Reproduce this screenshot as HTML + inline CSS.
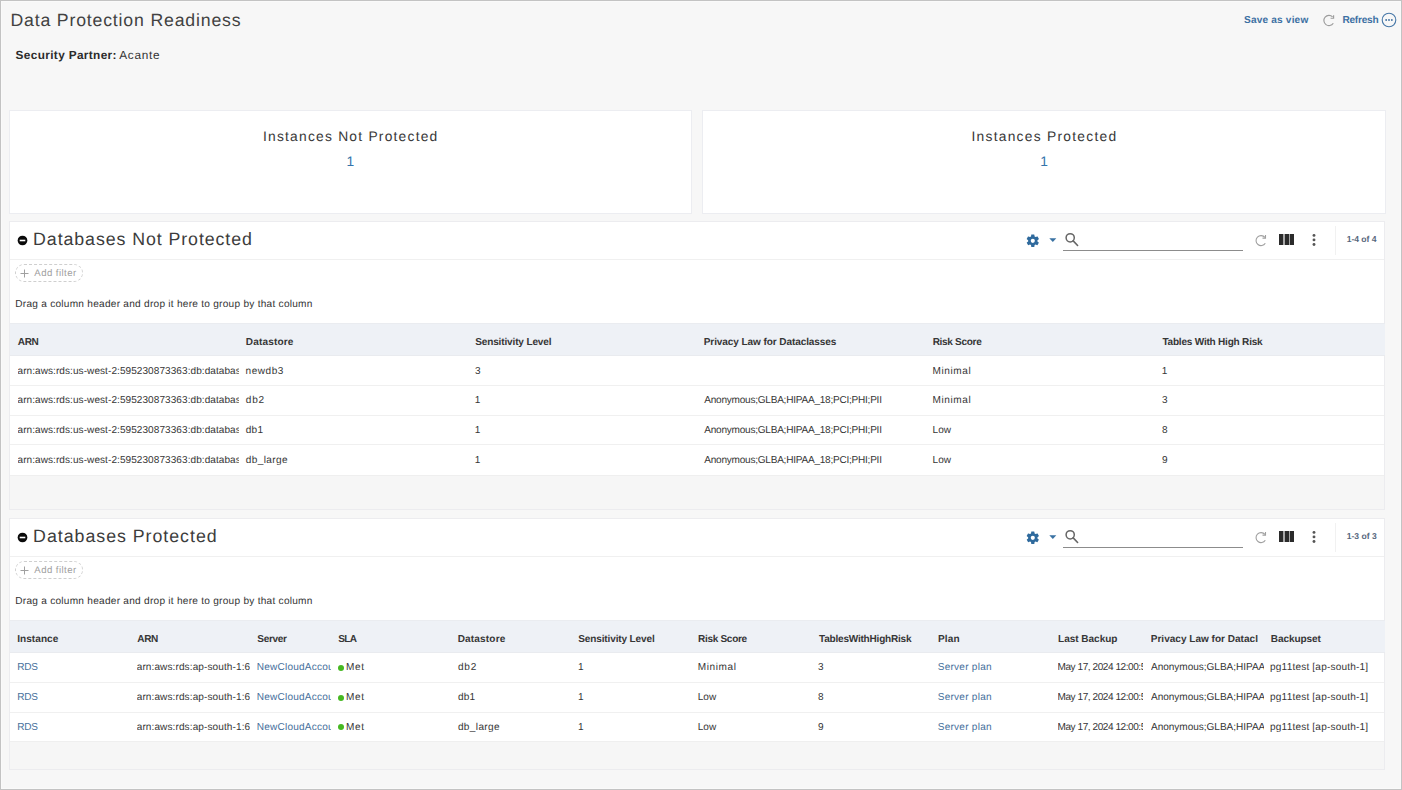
<!DOCTYPE html>
<html lang="en">
<head>
<meta charset="utf-8">
<title>Data Protection Readiness</title>
<style>
html,body{margin:0;padding:0;}
body{width:1402px;height:790px;overflow:hidden;background:#f7f7f7;font-family:"Liberation Sans",sans-serif;color:#2e2e2e;position:relative;text-rendering:geometricPrecision;}
#frame{position:absolute;left:0;top:0;width:1400px;height:788px;border:1px solid #c3c3c3;box-shadow:inset 0 0 0 1px #fafafa;z-index:50;}
.abs{position:absolute;}
.ic{position:absolute;overflow:visible;}
.t{position:absolute;white-space:nowrap;line-height:1;display:block;}
h1,h2{margin:0;font-weight:400;font-size:inherit;}
.card{position:absolute;background:#fff;border:1px solid #ecedf1;box-sizing:border-box;}
.panel{position:absolute;background:#fff;border:1px solid #ececef;box-sizing:border-box;left:9px;width:1376px;}
</style>
</head>
<body>
<div id="frame"></div>

<header>
<span class="t" style="left:10.4px;top:12px;font-size:17.7px;letter-spacing:0.825px;color:#424242;">Data Protection Readiness</span>
<span class="t" style="left:15.6px;top:50px;font-size:11.8px;font-weight:700;letter-spacing:0.363px;color:#2b2b2b;">Security Partner:</span>
<span class="t" style="left:119.2px;top:50px;font-size:11.8px;letter-spacing:0.73px;color:#333;">Acante</span>
<span class="t" style="left:1244.05px;top:16px;font-size:10.1px;font-weight:700;letter-spacing:0.173px;color:#3d70a3;">Save as view</span>
<span class="t" style="left:1342.45px;top:16px;font-size:10.1px;font-weight:700;letter-spacing:-0.242px;color:#3d70a3;">Refresh</span>
<svg class="ic" style="left:1320.9px;top:13.4px" width="16" height="16" viewBox="0 0 16 16"><path d="M11.6 3.9A5.1 5.1 0 1 0 12.3 10.2" fill="none" stroke="#9c9c9c" stroke-width="1.15"/><path d="M12.6 2.2v3H9.6" fill="none" stroke="#9c9c9c" stroke-width="1.15"/></svg>
<svg class="ic" style="left:1381.1px;top:11.5px" width="16" height="16" viewBox="0 0 16 16"><circle cx="8" cy="8" r="6.8" fill="none" stroke="#4677a7" stroke-width="1.1"/><circle cx="5.15" cy="8" r="0.9" fill="#3b6d9e"/><circle cx="8" cy="8" r="0.9" fill="#3b6d9e"/><circle cx="10.85" cy="8" r="0.9" fill="#3b6d9e"/></svg>
</header>

<section>
<div class="card" style="left:9px;top:110px;width:683px;height:104px;"></div>
<span class="t" style="left:262.95px;top:130px;font-size:13.8px;letter-spacing:1.232px;color:#383838;">Instances Not Protected</span>
<span class="t" style="left:346.4px;top:155px;font-size:13.8px;color:#3474ab;">1</span>
<div class="card" style="left:702px;top:110px;width:684px;height:104px;"></div>
<span class="t" style="left:971.45px;top:130px;font-size:13.8px;letter-spacing:1.264px;color:#383838;">Instances Protected</span>
<span class="t" style="left:1040.2px;top:155px;font-size:13.8px;color:#3474ab;">1</span>
</section>

<section id="not-protected">
<div class="panel" style="top:221px;height:289px;"></div>
<svg class="ic" style="left:16.9px;top:234.5px" width="11" height="11" viewBox="0 0 11 11"><circle cx="5.5" cy="5.5" r="4.85" fill="#0a0a0a"/><rect x="2.7" y="4.7" width="5.6" height="1.6" fill="#fff"/></svg><svg class="ic" style="left:1025.0px;top:232.8px" width="15.6" height="15.6" viewBox="0 0 24 24"><path fill="#2f6a9d" fill-rule="evenodd" d="M19.14 12.94c.04-.3.06-.61.06-.94 0-.32-.02-.64-.07-.94l2.03-1.58a.49.49 0 0 0 .12-.61l-1.92-3.32a.488.488 0 0 0-.59-.22l-2.39.96c-.5-.38-1.03-.7-1.62-.94l-.36-2.54a.484.484 0 0 0-.48-.41h-3.84c-.24 0-.43.17-.47.41l-.36 2.54c-.59.24-1.13.57-1.62.94l-2.39-.96c-.22-.08-.47 0-.59.22L2.74 8.87c-.12.21-.08.47.12.61l2.03 1.58c-.05.3-.09.63-.09.94s.02.64.07.94l-2.03 1.58a.49.49 0 0 0-.12.61l1.92 3.32c.12.22.37.29.59.22l2.39-.96c.5.38 1.03.7 1.62.94l.36 2.54c.05.24.24.41.48.41h3.84c.24 0 .44-.17.47-.41l.36-2.54c.59-.24 1.13-.56 1.62-.94l2.39.96c.22.08.47 0 .59-.22l1.92-3.32c.12-.22.07-.47-.12-.61l-2.01-1.58zM12 15.2a3.2 3.2 0 1 1 0-6.4 3.2 3.2 0 0 1 0 6.4z"/></svg><svg class="ic" style="left:1048.6px;top:238px" width="8" height="5" viewBox="0 0 8 5"><path d="M0.3 0.2h7L3.8 4z" fill="#3a72a3"/></svg><svg class="ic" style="left:1063px;top:231px" width="17" height="17" viewBox="0 0 17 17"><circle cx="7.2" cy="6.8" r="4.1" fill="none" stroke="#666" stroke-width="1.5"/><path d="M10.2 9.9l4.4 4.6" stroke="#666" stroke-width="1.6" stroke-linecap="round"/></svg><div class="abs" style="left:1063px;top:250px;width:180px;height:1px;background:#8c8c8c"></div><svg class="ic" style="left:1253px;top:233px" width="16" height="16" viewBox="0 0 16 16"><path d="M11.9 4.4A5 5 0 1 0 12.3 10.2" fill="none" stroke="#a0a0a0" stroke-width="1.1"/><path d="M12.5 2.1v3H9.5" fill="none" stroke="#a0a0a0" stroke-width="1.1"/></svg><div class="abs" style="left:1279px;top:233.6px;width:15px;height:11.4px;background:#a8a8a8"></div><div class="abs" style="left:1279.2px;top:233.6px;width:3.9px;height:11.4px;background:#2b2b2b"></div><div class="abs" style="left:1284.7px;top:233.6px;width:3.9px;height:11.4px;background:#2b2b2b"></div><div class="abs" style="left:1290.1px;top:233.6px;width:3.9px;height:11.4px;background:#2b2b2b"></div><svg class="ic" style="left:1310px;top:232px" width="8" height="16" viewBox="0 0 8 16"><circle cx="4" cy="3.4" r="1.45" fill="#555"/><circle cx="4" cy="7.9" r="1.45" fill="#555"/><circle cx="4" cy="12.5" r="1.45" fill="#555"/></svg><div class="abs" style="left:1335px;top:225.5px;width:1px;height:29px;background:#f1f1f1"></div><div class="abs" style="left:10px;top:259px;width:1374px;height:1px;background:#f0f0f0"></div><div class="abs" style="left:15px;top:264px;width:68px;height:18px;border:1px dashed #cfcfcf;border-radius:9px;box-sizing:border-box"></div><svg class="ic" style="left:19.5px;top:268.5px" width="9" height="9" viewBox="0 0 9 9"><path d="M4.5 0.5v8M0.5 4.5h8" stroke="#a0a0a0" stroke-width="1"/></svg>
<span class="t" style="left:33.1px;top:231px;font-size:17.8px;letter-spacing:0.916px;color:#3c3c3c;">Databases Not Protected</span>
<span class="t" style="left:1346.7px;top:235px;font-size:8.6px;font-weight:700;letter-spacing:-0.043px;color:#56667c;">1-4 of 4</span>
<span class="t" style="left:34.3px;top:269px;font-size:9.6px;letter-spacing:0.439px;color:#a0a0a0;">Add filter</span>
<span class="t" style="left:15.25px;top:300px;font-size:10.1px;letter-spacing:0.258px;color:#333;">Drag a column header and drop it here to group by that column</span>
<div class="abs" style="left:10px;top:323px;width:1374.6px;height:33px;background:#eef1f6;border-top:1px solid #eaecf0;border-bottom:1px solid #e9ebef;box-sizing:border-box"></div><div class="abs" style="left:10px;top:385px;width:1373.5px;height:1px;background:#f0f0f0"></div><div class="abs" style="left:10px;top:415px;width:1373.5px;height:1px;background:#f0f0f0"></div><div class="abs" style="left:10px;top:444px;width:1373.5px;height:1px;background:#f0f0f0"></div><div class="abs" style="left:10px;top:475px;width:1374px;height:34px;background:#f6f6f6;border-top:1px solid #efefef;box-sizing:border-box"></div>
<span class="t" style="left:17.75px;top:338px;font-size:10.05px;font-weight:700;letter-spacing:-0.375px;color:#363636;">ARN</span>
<span class="t" style="left:245.75px;top:338px;font-size:10.05px;font-weight:700;letter-spacing:0.156px;color:#363636;">Datastore</span>
<span class="t" style="left:475.15px;top:338px;font-size:10.05px;font-weight:700;letter-spacing:-0.147px;color:#363636;">Sensitivity Level</span>
<span class="t" style="left:703.75px;top:338px;font-size:10.05px;font-weight:700;letter-spacing:-0.096px;color:#363636;">Privacy Law for Dataclasses</span>
<span class="t" style="left:932.65px;top:338px;font-size:10.05px;font-weight:700;letter-spacing:-0.311px;color:#363636;">Risk Score</span>
<span class="t" style="left:1162.4px;top:338px;font-size:10.05px;font-weight:700;letter-spacing:-0.22px;color:#363636;">Tables With High Risk</span>
<span class="t" style="left:17.5px;top:367px;font-size:10.05px;letter-spacing:0.06px;color:#363636;width:221.5px;overflow:hidden;">arn:aws:rds:us-west-2:595230873363:db:database-1</span>
<span class="t" style="left:245.55px;top:367px;font-size:10.05px;letter-spacing:0.54px;color:#363636;">newdb3</span>
<span class="t" style="left:475.1px;top:367px;font-size:10.05px;color:#363636;">3</span>
<span class="t" style="left:932.55px;top:367px;font-size:10.05px;letter-spacing:0.592px;color:#363636;">Minimal</span>
<span class="t" style="left:1161.65px;top:367px;font-size:10.05px;color:#363636;">1</span>
<span class="t" style="left:17.5px;top:396px;font-size:10.05px;letter-spacing:0.06px;color:#363636;width:221.5px;overflow:hidden;">arn:aws:rds:us-west-2:595230873363:db:database-1</span>
<span class="t" style="left:245.8px;top:396px;font-size:10.05px;letter-spacing:0.825px;color:#363636;">db2</span>
<span class="t" style="left:474.85px;top:396px;font-size:10.05px;color:#363636;">1</span>
<span class="t" style="left:704.3px;top:396px;font-size:10.05px;letter-spacing:-0.238px;color:#363636;">Anonymous;GLBA;HIPAA_18;PCI;PHI;PII</span>
<span class="t" style="left:932.55px;top:396px;font-size:10.05px;letter-spacing:0.592px;color:#363636;">Minimal</span>
<span class="t" style="left:1161.9px;top:396px;font-size:10.05px;color:#363636;">3</span>
<span class="t" style="left:17.5px;top:426px;font-size:10.05px;letter-spacing:0.06px;color:#363636;width:221.5px;overflow:hidden;">arn:aws:rds:us-west-2:595230873363:db:database-1</span>
<span class="t" style="left:245.8px;top:426px;font-size:10.05px;letter-spacing:0.225px;color:#363636;">db1</span>
<span class="t" style="left:474.85px;top:426px;font-size:10.05px;color:#363636;">1</span>
<span class="t" style="left:704.3px;top:426px;font-size:10.05px;letter-spacing:-0.238px;color:#363636;">Anonymous;GLBA;HIPAA_18;PCI;PHI;PII</span>
<span class="t" style="left:932.55px;top:426px;font-size:10.05px;letter-spacing:0.025px;color:#363636;">Low</span>
<span class="t" style="left:1161.9px;top:426px;font-size:10.05px;color:#363636;">8</span>
<span class="t" style="left:17.5px;top:456px;font-size:10.05px;letter-spacing:0.06px;color:#363636;width:221.5px;overflow:hidden;">arn:aws:rds:us-west-2:595230873363:db:database-1</span>
<span class="t" style="left:245.8px;top:456px;font-size:10.05px;letter-spacing:0.379px;color:#363636;">db_large</span>
<span class="t" style="left:474.85px;top:456px;font-size:10.05px;color:#363636;">1</span>
<span class="t" style="left:704.3px;top:456px;font-size:10.05px;letter-spacing:-0.238px;color:#363636;">Anonymous;GLBA;HIPAA_18;PCI;PHI;PII</span>
<span class="t" style="left:932.55px;top:456px;font-size:10.05px;letter-spacing:0.025px;color:#363636;">Low</span>
<span class="t" style="left:1161.9px;top:456px;font-size:10.05px;color:#363636;">9</span>
</section>

<section id="protected">
<div class="panel" style="top:518px;height:252px;"></div>
<svg class="ic" style="left:16.9px;top:531.5px" width="11" height="11" viewBox="0 0 11 11"><circle cx="5.5" cy="5.5" r="4.85" fill="#0a0a0a"/><rect x="2.7" y="4.7" width="5.6" height="1.6" fill="#fff"/></svg><svg class="ic" style="left:1025.0px;top:529.8px" width="15.6" height="15.6" viewBox="0 0 24 24"><path fill="#2f6a9d" fill-rule="evenodd" d="M19.14 12.94c.04-.3.06-.61.06-.94 0-.32-.02-.64-.07-.94l2.03-1.58a.49.49 0 0 0 .12-.61l-1.92-3.32a.488.488 0 0 0-.59-.22l-2.39.96c-.5-.38-1.03-.7-1.62-.94l-.36-2.54a.484.484 0 0 0-.48-.41h-3.84c-.24 0-.43.17-.47.41l-.36 2.54c-.59.24-1.13.57-1.62.94l-2.39-.96c-.22-.08-.47 0-.59.22L2.74 8.87c-.12.21-.08.47.12.61l2.03 1.58c-.05.3-.09.63-.09.94s.02.64.07.94l-2.03 1.58a.49.49 0 0 0-.12.61l1.92 3.32c.12.22.37.29.59.22l2.39-.96c.5.38 1.03.7 1.62.94l.36 2.54c.05.24.24.41.48.41h3.84c.24 0 .44-.17.47-.41l.36-2.54c.59-.24 1.13-.56 1.62-.94l2.39.96c.22.08.47 0 .59-.22l1.92-3.32c.12-.22.07-.47-.12-.61l-2.01-1.58zM12 15.2a3.2 3.2 0 1 1 0-6.4 3.2 3.2 0 0 1 0 6.4z"/></svg><svg class="ic" style="left:1048.6px;top:535px" width="8" height="5" viewBox="0 0 8 5"><path d="M0.3 0.2h7L3.8 4z" fill="#3a72a3"/></svg><svg class="ic" style="left:1063px;top:528px" width="17" height="17" viewBox="0 0 17 17"><circle cx="7.2" cy="6.8" r="4.1" fill="none" stroke="#666" stroke-width="1.5"/><path d="M10.2 9.9l4.4 4.6" stroke="#666" stroke-width="1.6" stroke-linecap="round"/></svg><div class="abs" style="left:1063px;top:547px;width:180px;height:1px;background:#8c8c8c"></div><svg class="ic" style="left:1253px;top:530px" width="16" height="16" viewBox="0 0 16 16"><path d="M11.9 4.4A5 5 0 1 0 12.3 10.2" fill="none" stroke="#a0a0a0" stroke-width="1.1"/><path d="M12.5 2.1v3H9.5" fill="none" stroke="#a0a0a0" stroke-width="1.1"/></svg><div class="abs" style="left:1279px;top:530.6px;width:15px;height:11.4px;background:#a8a8a8"></div><div class="abs" style="left:1279.2px;top:530.6px;width:3.9px;height:11.4px;background:#2b2b2b"></div><div class="abs" style="left:1284.7px;top:530.6px;width:3.9px;height:11.4px;background:#2b2b2b"></div><div class="abs" style="left:1290.1px;top:530.6px;width:3.9px;height:11.4px;background:#2b2b2b"></div><svg class="ic" style="left:1310px;top:529px" width="8" height="16" viewBox="0 0 8 16"><circle cx="4" cy="3.4" r="1.45" fill="#555"/><circle cx="4" cy="7.9" r="1.45" fill="#555"/><circle cx="4" cy="12.5" r="1.45" fill="#555"/></svg><div class="abs" style="left:1335px;top:522.5px;width:1px;height:29px;background:#f1f1f1"></div><div class="abs" style="left:10px;top:556px;width:1374px;height:1px;background:#f0f0f0"></div><div class="abs" style="left:15px;top:561px;width:68px;height:18px;border:1px dashed #cfcfcf;border-radius:9px;box-sizing:border-box"></div><svg class="ic" style="left:19.5px;top:565.5px" width="9" height="9" viewBox="0 0 9 9"><path d="M4.5 0.5v8M0.5 4.5h8" stroke="#a0a0a0" stroke-width="1"/></svg>
<span class="t" style="left:33.1px;top:528px;font-size:17.8px;letter-spacing:0.972px;color:#3c3c3c;">Databases Protected</span>
<span class="t" style="left:1346.7px;top:532px;font-size:8.6px;font-weight:700;letter-spacing:-0.007px;color:#56667c;">1-3 of 3</span>
<span class="t" style="left:34.3px;top:566px;font-size:9.6px;letter-spacing:0.439px;color:#a0a0a0;">Add filter</span>
<span class="t" style="left:15.25px;top:597px;font-size:10.1px;letter-spacing:0.258px;color:#333;">Drag a column header and drop it here to group by that column</span>
<div class="abs" style="left:10px;top:620px;width:1374.6px;height:33px;background:#eef1f6;border-top:1px solid #eaecf0;border-bottom:1px solid #e9ebef;box-sizing:border-box"></div><div class="abs" style="left:10px;top:682px;width:1373.5px;height:1px;background:#f0f0f0"></div><div class="abs" style="left:10px;top:712px;width:1373.5px;height:1px;background:#f0f0f0"></div><div class="abs" style="left:10px;top:741px;width:1374px;height:28px;background:#f6f6f6;border-top:1px solid #efefef;box-sizing:border-box"></div>
<div class="abs" style="left:338.2px;top:665.2px;width:6px;height:6px;border-radius:50%;background:#46b821"></div><div class="abs" style="left:338.2px;top:694.8px;width:6px;height:6px;border-radius:50%;background:#46b821"></div><div class="abs" style="left:338.2px;top:724.3px;width:6px;height:6px;border-radius:50%;background:#46b821"></div>
<span class="t" style="left:17.25px;top:635px;font-size:10.05px;font-weight:700;letter-spacing:0.036px;color:#363636;">Instance</span>
<span class="t" style="left:137.25px;top:635px;font-size:10.05px;font-weight:700;letter-spacing:-0.375px;color:#363636;">ARN</span>
<span class="t" style="left:257.25px;top:635px;font-size:10.05px;font-weight:700;letter-spacing:-0.3px;color:#363636;">Server</span>
<span class="t" style="left:338.35px;top:635px;font-size:10.05px;font-weight:700;letter-spacing:-0.75px;color:#363636;">SLA</span>
<span class="t" style="left:457.65px;top:635px;font-size:10.05px;font-weight:700;letter-spacing:0.169px;color:#363636;">Datastore</span>
<span class="t" style="left:578.25px;top:635px;font-size:10.05px;font-weight:700;letter-spacing:-0.141px;color:#363636;">Sensitivity Level</span>
<span class="t" style="left:697.95px;top:635px;font-size:10.05px;font-weight:700;letter-spacing:-0.3px;color:#363636;">Risk Score</span>
<span class="t" style="left:819.0px;top:635px;font-size:10.05px;font-weight:700;letter-spacing:-0.221px;color:#363636;">TablesWithHighRisk</span>
<span class="t" style="left:937.95px;top:635px;font-size:10.05px;font-weight:700;letter-spacing:0.183px;color:#363636;">Plan</span>
<span class="t" style="left:1058.05px;top:635px;font-size:10.05px;font-weight:700;letter-spacing:-0.035px;color:#363636;">Last Backup</span>
<span class="t" style="left:1270.85px;top:635px;font-size:10.05px;font-weight:700;letter-spacing:-0.112px;color:#363636;">Backupset</span>
<span class="t" style="left:1150.75px;top:635px;font-size:10.05px;font-weight:700;letter-spacing:-0.002px;color:#363636;width:106.95px;overflow:hidden;">Privacy Law for Dataclasses</span>
<span class="t" style="left:17.15px;top:663px;font-size:10.05px;letter-spacing:-0.25px;color:#46709c;">RDS</span>
<span class="t" style="left:136.7px;top:663px;font-size:10.05px;letter-spacing:0.102px;color:#363636;width:113.8px;overflow:hidden;">arn:aws:rds:ap-south-1:679456123872:db:pg11test</span>
<span class="t" style="left:256.75px;top:663px;font-size:10.05px;letter-spacing:0.209px;color:#46709c;width:74.25px;overflow:hidden;">NewCloudAccount</span>
<span class="t" style="left:346.05px;top:663px;font-size:10.05px;letter-spacing:0.6px;color:#363636;">Met</span>
<span class="t" style="left:457.9px;top:663px;font-size:10.05px;letter-spacing:0.825px;color:#363636;">db2</span>
<span class="t" style="left:577.95px;top:663px;font-size:10.05px;color:#363636;">1</span>
<span class="t" style="left:697.75px;top:663px;font-size:10.05px;letter-spacing:0.592px;color:#363636;">Minimal</span>
<span class="t" style="left:817.9px;top:663px;font-size:10.05px;color:#363636;">3</span>
<span class="t" style="left:937.7px;top:663px;font-size:10.05px;letter-spacing:0.255px;color:#46709c;">Server plan</span>
<span class="t" style="left:1057.55px;top:663px;font-size:10.05px;letter-spacing:-0.444px;color:#363636;width:85.95px;overflow:hidden;">May 17, 2024 12:00:53 AM</span>
<span class="t" style="left:1151.0px;top:663px;font-size:10.05px;letter-spacing:-0.029px;color:#363636;width:113.0px;overflow:hidden;">Anonymous;GLBA;HIPAA_18;PCI;PHI;PII</span>
<span class="t" style="left:1270.05px;top:663px;font-size:10.05px;letter-spacing:0.193px;color:#363636;">pg11test [ap-south-1]</span>
<span class="t" style="left:17.15px;top:693px;font-size:10.05px;letter-spacing:-0.25px;color:#46709c;">RDS</span>
<span class="t" style="left:136.7px;top:693px;font-size:10.05px;letter-spacing:0.102px;color:#363636;width:113.8px;overflow:hidden;">arn:aws:rds:ap-south-1:679456123872:db:pg11test</span>
<span class="t" style="left:256.75px;top:693px;font-size:10.05px;letter-spacing:0.209px;color:#46709c;width:74.25px;overflow:hidden;">NewCloudAccount</span>
<span class="t" style="left:346.05px;top:693px;font-size:10.05px;letter-spacing:0.6px;color:#363636;">Met</span>
<span class="t" style="left:457.9px;top:693px;font-size:10.05px;letter-spacing:0.225px;color:#363636;">db1</span>
<span class="t" style="left:577.95px;top:693px;font-size:10.05px;color:#363636;">1</span>
<span class="t" style="left:697.75px;top:693px;font-size:10.05px;letter-spacing:0.025px;color:#363636;">Low</span>
<span class="t" style="left:817.9px;top:693px;font-size:10.05px;color:#363636;">8</span>
<span class="t" style="left:937.7px;top:693px;font-size:10.05px;letter-spacing:0.255px;color:#46709c;">Server plan</span>
<span class="t" style="left:1057.55px;top:693px;font-size:10.05px;letter-spacing:-0.444px;color:#363636;width:85.95px;overflow:hidden;">May 17, 2024 12:00:53 AM</span>
<span class="t" style="left:1151.0px;top:693px;font-size:10.05px;letter-spacing:-0.029px;color:#363636;width:113.0px;overflow:hidden;">Anonymous;GLBA;HIPAA_18;PCI;PHI;PII</span>
<span class="t" style="left:1270.05px;top:693px;font-size:10.05px;letter-spacing:0.193px;color:#363636;">pg11test [ap-south-1]</span>
<span class="t" style="left:17.15px;top:723px;font-size:10.05px;letter-spacing:-0.25px;color:#46709c;">RDS</span>
<span class="t" style="left:136.7px;top:723px;font-size:10.05px;letter-spacing:0.102px;color:#363636;width:113.8px;overflow:hidden;">arn:aws:rds:ap-south-1:679456123872:db:pg11test</span>
<span class="t" style="left:256.75px;top:723px;font-size:10.05px;letter-spacing:0.209px;color:#46709c;width:74.25px;overflow:hidden;">NewCloudAccount</span>
<span class="t" style="left:346.05px;top:723px;font-size:10.05px;letter-spacing:0.6px;color:#363636;">Met</span>
<span class="t" style="left:457.9px;top:723px;font-size:10.05px;letter-spacing:0.379px;color:#363636;">db_large</span>
<span class="t" style="left:577.95px;top:723px;font-size:10.05px;color:#363636;">1</span>
<span class="t" style="left:697.75px;top:723px;font-size:10.05px;letter-spacing:0.025px;color:#363636;">Low</span>
<span class="t" style="left:817.9px;top:723px;font-size:10.05px;color:#363636;">9</span>
<span class="t" style="left:937.7px;top:723px;font-size:10.05px;letter-spacing:0.255px;color:#46709c;">Server plan</span>
<span class="t" style="left:1057.55px;top:723px;font-size:10.05px;letter-spacing:-0.444px;color:#363636;width:85.95px;overflow:hidden;">May 17, 2024 12:00:53 AM</span>
<span class="t" style="left:1151.0px;top:723px;font-size:10.05px;letter-spacing:-0.029px;color:#363636;width:113.0px;overflow:hidden;">Anonymous;GLBA;HIPAA_18;PCI;PHI;PII</span>
<span class="t" style="left:1270.05px;top:723px;font-size:10.05px;letter-spacing:0.193px;color:#363636;">pg11test [ap-south-1]</span>
</section>

</body>
</html>
